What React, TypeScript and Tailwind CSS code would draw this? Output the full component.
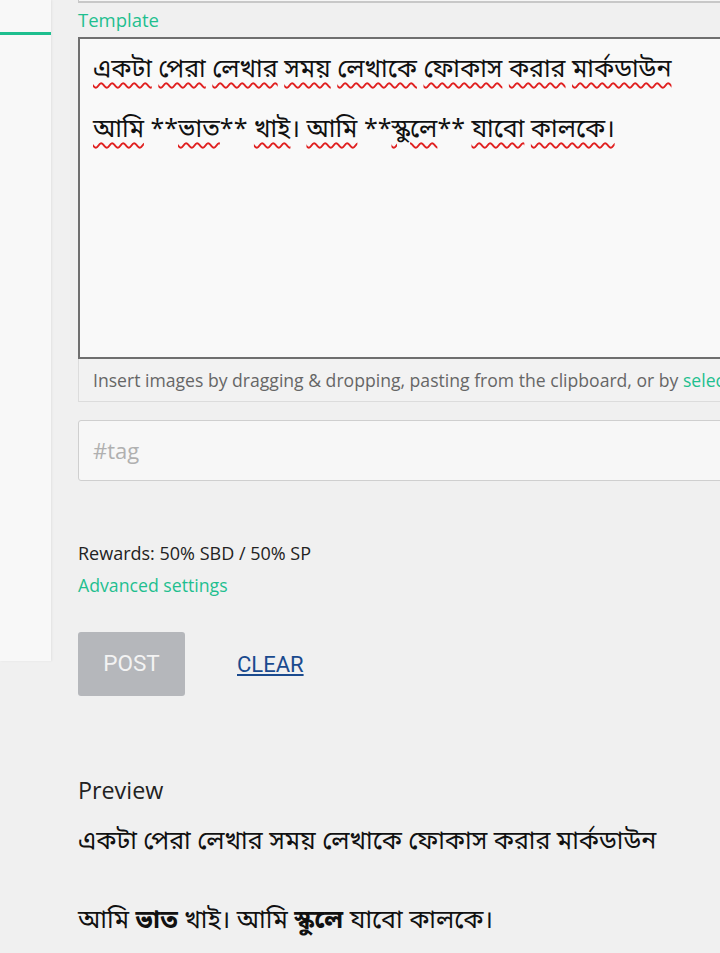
const bn = "font-['Noto_Sans_Bengali','Lohit_Bengali','Noto_Sans',sans-serif]";
const sp = "underline decoration-wavy decoration-[#e02020] decoration-[1.5px] underline-offset-[5px]";

export default function App() {
  return (
    <div className="relative min-h-[953px] w-[720px] overflow-hidden bg-[#f0f0f0] font-['Open_Sans',sans-serif]">
      <div className="flex">
        {/* side panel */}
        <aside className="h-[661px] w-[51px] shrink-0 bg-[#f8f8f8] shadow-[1px_0_2px_rgba(0,0,0,0.06)]">
          <div className="mt-[32px] h-[3px] w-full bg-[#1fbf8f]" />
        </aside>

        <main className="ml-[27px] flex-1">
          <div className="-mt-[20px] h-[23px] border-b-2 border-l border-[#c8c8c8] bg-[#f6f6f6]" />
          <label className="mt-[5px] block text-[18.5px] leading-[24px] text-[#1fbf8f]">Template</label>

          <div className={`mt-[5px] h-[322px] w-[660px] border-2 border-[#6f6f6f] bg-[#f9f9f9] px-[13px] pt-[2px] text-[25px] leading-[60px] text-[#111] ${bn}`}>
            <p>
              <span className={sp}>একটা</span> <span className={sp}>পেরা</span> <span className={sp}>লেখার</span>{" "}
              <span className={sp}>সময়</span> <span className={sp}>লেখাকে</span> <span className={sp}>ফোকাস</span>{" "}
              <span className={sp}>করার</span> <span className={sp}>মার্কডাউন</span>
            </p>
            <p>
              <span className={sp}>আমি</span> **<span className={sp}>ভাত</span>** <span className={sp}>খাই</span>।{" "}
              <span className={sp}>আমি</span> **<span className={sp}>স্কুলে</span>** <span className={sp}>যাবো</span>{" "}
              <span className={sp}>কালকে।</span>
            </p>
          </div>
          <div className="h-[43px] w-[660px] overflow-hidden whitespace-nowrap border border-t-0 border-[#dcdcdc] bg-[#f2f2f2] px-[14px] text-[17.6px] leading-[42px] text-[#666]">
            Insert images by dragging &amp; dropping, pasting from the clipboard, or by{" "}
            <span className="text-[#1fbf8f]">selecting them</span>
          </div>

          <div className="mt-[18px] h-[61px] w-[660px] rounded-[3px] border border-[#cfcfcf] bg-[#f7f7f7] px-[14px] text-[22px] leading-[59px] text-[#b0b0b0]">
            #tag
          </div>

          <p className="mt-[60px] text-[18px] leading-[24px] text-[#222]">Rewards: 50% SBD / 50% SP</p>
          <p className="mt-[8px] text-[17.7px] leading-[24px] text-[#1fbf8f]">Advanced settings</p>

          <div className="mt-[35px] flex items-center font-['Roboto',sans-serif]">
            <button className="h-[64px] w-[107px] rounded-[3px] bg-[#b5b7bb] text-[22.5px] text-[#f3f3f3]">POST</button>
            <a className="ml-[52px] text-[22px] text-[#1a4a8e] underline underline-offset-2">CLEAR</a>
          </div>

          <h2 className="mt-[79px] text-[23.3px] leading-[30px] text-[#222]">Preview</h2>
          <div className={`mt-[21px] text-[25px] text-[#111] ${bn}`}>
            <p className="leading-[34px]">একটা পেরা লেখার সময় লেখাকে ফোকাস করার মার্কডাউন</p>
            <p className="mt-[45px] leading-[34px]">
              আমি <strong>ভাত</strong> খাই। আমি <strong>স্কুলে</strong> যাবো কালকে।
            </p>
          </div>
        </main>
      </div>
    </div>
  );
}
